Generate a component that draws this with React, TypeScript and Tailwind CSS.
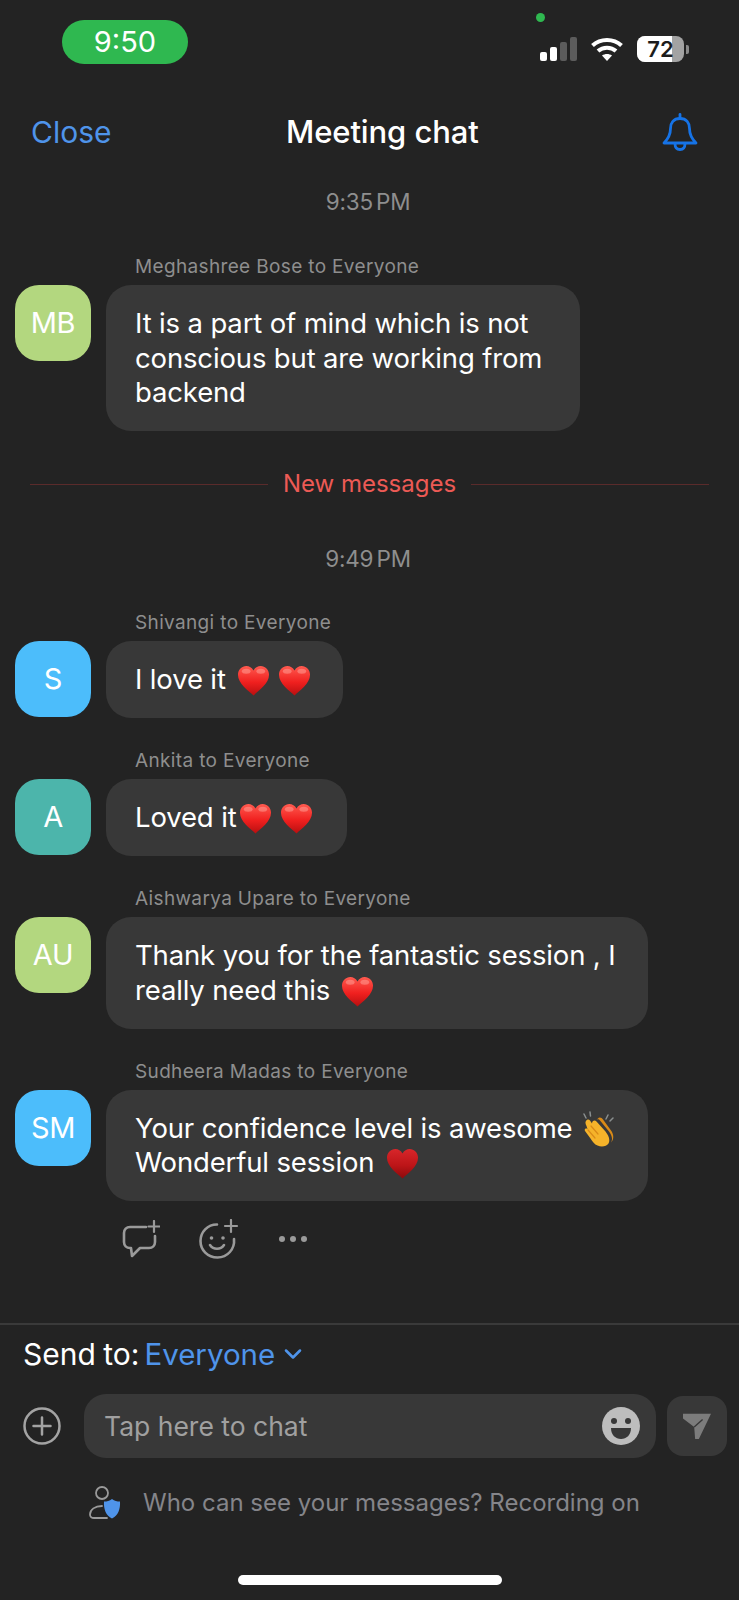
import React, { useId } from 'react';
import { ChevronDown } from 'lucide-react';

function Heart({ dark = false, className = '' }: { dark?: boolean; className?: string }) {
  const id = useId();
  return (
    <svg viewBox="0 0 34 32" className={`-my-[2px] inline-block h-[33px] w-[33px] align-[-6px] ${className}`}>
      <defs>
        <linearGradient id={id} x1="0" y1="0" x2="0" y2="1">
          <stop offset="0" stopColor={dark ? '#d8262a' : '#ff5a4f'} />
          <stop offset="0.55" stopColor={dark ? '#bd1518' : '#f0201f'} />
          <stop offset="1" stopColor={dark ? '#8c0a0c' : '#b80f10'} />
        </linearGradient>
      </defs>
      <path
        d="M17 31.5C12 26.5 1 19.5 1 10.2 1 4.6 5 1 9.6 1 12.6 1 15.400 2.600 17 5.600 18.600 2.600 21.400 1 24.400 1 29 1 33 4.600 33 10.200 33 19.500 22 26.500 17 31.500Z"
        fill={`url(#${id})`}
      />
      {!dark && <ellipse cx="9.500" cy="6.500" rx="4.500" ry="2.600" fill="#ff9d94" opacity="0.55" />}
      {!dark && <ellipse cx="24.500" cy="6.500" rx="4.500" ry="2.600" fill="#ff9d94" opacity="0.55" />}
    </svg>
  );
}

function Clap() {
  return (
    <svg viewBox="0 0 34 36" className="-my-[4px] ml-[1px] inline-block h-[36px] w-[34px] align-[-5px]">
      <path d="M3 3l2 4M9 1l.5 4M27 4l-2 4M32 7l-3 3" stroke="#8a8f8f" strokeWidth="1.500" strokeLinecap="round" />
      <path
        d="M5 10c1-2 3-2 4-.500l2 3c0-3 3-4 4.500-2l9 10c3 4 5 8 3 12-2 3-7 4-11 2-3-1-5-4-7-7L4 20c-1-2 1-3 2.500-2l-1-3C4.500 13 4 11.500 5 10Z"
        fill="#f5b32a"
      />
      <path
        d="M15 9c1-1 3-1 4 .500l9 11c3 4 4 8 2 11 3-3 3-8 0-12l-8-11c-1-2-4-3-5-1l-2 1.500Z"
        fill="#d98a17"
      />
      <path d="M10 15l7 8M7 19l7 8" stroke="#d98a17" strokeWidth="1.200" strokeLinecap="round" />
    </svg>
  );
}

function Avatar({ label, color }: { label: string; color: string }) {
  return (
    <div className={`flex h-[76px] w-[76px] shrink-0 items-center justify-center rounded-[24px] text-[29px] tracking-[-0.3px] text-white ${color}`}>
      {label}
    </div>
  );
}

function Message({
  sender,
  initials,
  color,
  width,
  children,
}: {
  sender: string;
  initials: string;
  color: string;
  width: string;
  children: React.ReactNode;
}) {
  return (
    <div className="pl-[15px]">
      <div className="mb-[8px] pl-[120px] text-[19px] leading-[20px] tracking-[0.35px] text-[#8e8e8e]">{sender}</div>
      <div className="flex items-start gap-[15px]">
        <Avatar label={initials} color={color} />
        <div className={`rounded-[25px] bg-[#383838] pt-[21px] pb-[21.5px] pl-[29px] text-[27.5px] leading-[34.5px] tracking-[-0.15px] text-white ${width}`}>
          {children}
        </div>
      </div>
    </div>
  );
}

function StatusBar() {
  return (
    <div className="relative flex h-[100px] shrink-0 items-start justify-between pt-[20px] pl-[62px] pr-[50px]">
      <div className="flex h-[44px] w-[126px] items-center justify-center rounded-[22px] bg-[#2fb850] text-[29px] text-white">
        9:50
      </div>
      <span className="absolute left-[536px] top-[13px] h-[9px] w-[9px] rounded-full bg-[#2fb850]" />
      <div className="mt-[16px] flex items-center gap-[14px]">
        <div className="flex h-[24px] items-end gap-[3px]">
          <span className="h-[9px] w-[7px] rounded-[2px] bg-white" />
          <span className="h-[14px] w-[7px] rounded-[2px] bg-white" />
          <span className="h-[19px] w-[7px] rounded-[2px] bg-[#5c5c5c]" />
          <span className="h-[24px] w-[7px] rounded-[2px] bg-[#5c5c5c]" />
        </div>
        <svg viewBox="0 0 32 24" className="h-[24px] w-[32px]" fill="none" stroke="white" strokeWidth="4">
          <path d="M1.500 8.500C9.500 1 22.500 1 30.500 8.500" />
          <path d="M7 14c5-4.500 13-4.500 18 0" />
          <path d="M16 24l-5-5.500c3-2 7-2 10 0Z" fill="white" stroke="none" />
        </svg>
        <div className="flex items-center gap-[2px]">
          <div className="relative flex h-[26px] w-[47px] items-center justify-center overflow-hidden rounded-[8px] bg-[#a3a3a3]">
            <span className="absolute inset-y-0 left-0 w-[35px] bg-white" />
            <span className="relative text-[22px] font-semibold leading-none text-[#1c1c1c]">72</span>
          </div>
          <span className="h-[9px] w-[3px] rounded-r-[2px] bg-[#8a8a8a]" />
        </div>
      </div>
    </div>
  );
}

function Timestamp({ text }: { text: string }) {
  return (
    <div className="pr-[3px] text-center text-[22.5px] leading-[26px] tracking-[-0.2px] text-[#8e8e8e] [word-spacing:-3px]">
      {text}
    </div>
  );
}

export default function App() {
  return (
    <div className="flex h-[1600px] w-[739px] flex-col overflow-hidden bg-[#232323] font-['Inter',sans-serif]">
      <StatusBar />

      <div className="flex h-[64px] shrink-0 items-center pl-[31px] pr-[41px]">
        <span className="w-[80px] text-[30px] text-[#4f94ea]">Close</span>
        <span className="ml-[175px] text-[31px] font-medium tracking-[-0.1px] text-white">Meeting chat</span>
        <svg viewBox="0 0 36 38" className="ml-auto h-[38px] w-[36px]" fill="none" stroke="#1673e6" strokeWidth="2.800" strokeLinejoin="round">
          <path d="M18 5.500c-6.500 0-9.500 4.500-9.500 10 0 6-2 10-6.500 14.500h32c-4.500-4.500-6.500-8.500-6.500-14.500 0-5.500-3-10-9.500-10Z" />
          <path d="M18 1.500v4" strokeLinecap="round" />
          <path d="M13 30.500c0 4 2.200 6 5 6s5-2 5-6" />
        </svg>
      </div>

      <div className="mt-[25px]">
        <Timestamp text="9:35 PM" />
      </div>

      <div className="mt-[42px]">
        <Message sender="Meghashree Bose to Everyone" initials="MB" color="bg-[#b3d77f]" width="w-[474px]">
          It is a part of mind which is not
          <br />
          conscious but are working from
          <br />
          backend
        </Message>
      </div>

      <div className="mt-[40px] flex items-center gap-[15px] px-[30px]">
        <span className="h-px flex-1 bg-[#5a2b2b]" />
        <span className="text-[24px] leading-[26px] text-[#ec5a55]">New messages</span>
        <span className="h-px flex-1 bg-[#5a2b2b]" />
      </div>

      <div className="mt-[49px]">
        <Timestamp text="9:49 PM" />
      </div>

      <div className="mt-[41px] flex flex-col gap-[33px]">
        <Message sender="Shivangi to Everyone" initials="S" color="bg-[#4cbdfb]" width="w-[237px]">
          I love it <Heart className="ml-[4px]" /> <Heart />
        </Message>
        <Message sender="Ankita to Everyone" initials="A" color="bg-[#4cb5ab]" width="w-[241px]">
          Loved it
          <Heart className="ml-[3px]" /> <Heart />
        </Message>
        <Message sender="Aishwarya Upare to Everyone" initials="AU" color="bg-[#b3d77f]" width="w-[542px]">
          Thank you for the fantastic session , I
          <br />
          really need this <Heart className="ml-[3px]" />
        </Message>
        <Message sender="Sudheera Madas to Everyone" initials="SM" color="bg-[#4cbdfb]" width="w-[542px]">
          Your confidence level is awesome <Clap />
          <br />
          Wonderful session <Heart dark className="ml-[4px]" />
        </Message>
      </div>

      <div className="mt-[19px] flex h-[38px] items-center pl-[122px] text-[#9a9a9a]">
        <svg viewBox="0 0 38 38" className="h-[38px] w-[38px]" fill="none" stroke="currentColor" strokeWidth="2.600" strokeLinecap="round" strokeLinejoin="round">
          <path d="M24 7H8C4.500 7 2 9.500 2 13v9c0 3.500 2.500 6 6 6h1l1 8 8-8h9c3.500 0 6-2.500 6-6v-6" />
          <path d="M32 1v11M26.500 6.500h11" strokeWidth="2.200" />
        </svg>
        <svg viewBox="0 0 40 40" className="ml-[39px] h-[40px] w-[40px]" fill="none" stroke="currentColor" strokeWidth="2.600" strokeLinecap="round">
          <path d="M35 20c1 10-6.500 18.500-16.500 18.500S1.500 31 1.500 22 8.500 5.500 18 5.500" />
          <circle cx="12.500" cy="19" r="1.800" fill="currentColor" stroke="none" />
          <circle cx="24" cy="19" r="1.800" fill="currentColor" stroke="none" />
          <path d="M11 26c3.500 5 10.500 5 14 0" />
          <path d="M32 1v12M26 7h12" strokeWidth="2.200" />
        </svg>
        <div className="ml-[40px] flex gap-[5px]">
          <span className="h-[6px] w-[6px] rounded-full bg-current" />
          <span className="h-[6px] w-[6px] rounded-full bg-current" />
          <span className="h-[6px] w-[6px] rounded-full bg-current" />
        </div>
      </div>

      <div className="mt-[65px] border-t-2 border-[#3a3a3a] pt-[12px]">
        <div className="flex items-center pl-[23px] leading-[34px]">
          <span className="text-[30px] text-white [word-spacing:-1px]">Send to:</span>
          <span className="ml-[5px] text-[29.5px] text-[#4f94ea]">Everyone</span>
          <ChevronDown size={28} strokeWidth={2.200} className="ml-[4px] text-[#4f94ea]" />
        </div>

        <div className="mt-[23px] flex items-center pl-[23px] pr-[12px]">
          <svg viewBox="0 0 38 38" className="h-[38px] w-[38px]" fill="none" stroke="#a3a3a3" strokeWidth="2.500" strokeLinecap="round">
            <circle cx="19" cy="19" r="17.500" />
            <path d="M19 10.500v17M10.500 19h17" />
          </svg>
          <div className="ml-[23px] flex h-[64px] flex-1 items-center justify-between rounded-[22px] bg-[#383838] pl-[20px] pr-[16px]">
            <span className="pt-[2px] text-[26.5px] text-[#a0a0a0]">Tap here to chat</span>
            <svg viewBox="0 0 38 38" className="h-[38px] w-[38px]">
              <circle cx="19" cy="19" r="19" fill="#bdbdbd" />
              <circle cx="12" cy="14" r="3" fill="#383838" />
              <circle cx="26" cy="14" r="3" fill="#383838" />
              <path d="M9 21h20c0 7-4.500 11-10 11S9 28 9 21Z" fill="#383838" />
            </svg>
          </div>
          <div className="ml-[11px] flex h-[60px] w-[60px] items-center justify-center rounded-[16px] bg-[#383838]">
            <svg viewBox="0 0 32 30" className="h-[28px] w-[30px]">
              <path d="M1 2h30L18 29h-4l-1-13L1 7Z" fill="#7c7c7c" />
              <path d="M13 16l9-8" stroke="#383838" strokeWidth="1.500" />
            </svg>
          </div>
        </div>

        <div className="mt-[27px] flex items-center pl-[89px]">
          <svg viewBox="0 0 32 34" className="h-[34px] w-[32px]" fill="none">
            <circle cx="13" cy="8" r="6" stroke="#9a9a9a" strokeWidth="1.800" />
            <path d="M18 33H5c-2.500 0-4-1.500-4-3.500C1 24.500 6 21 13 21" stroke="#9a9a9a" strokeWidth="1.800" strokeLinecap="round" />
            <path d="M23 14c2.500 2 5 2.500 8 2.500 .5 8-2 14-8 17-6-3-8.500-9-8-17 3 0 5.500-.5 8-2.500Z" fill="#4f94ea" />
          </svg>
          <span className="ml-[22px] pt-[1px] text-[24px] leading-[30px] text-[#85858a]">Who can see your messages? Recording on</span>
        </div>
      </div>

      <div className="mt-auto flex justify-center pb-[15px]">
        <span className="h-[10px] w-[264px] rounded-full bg-white" />
      </div>
    </div>
  );
}
